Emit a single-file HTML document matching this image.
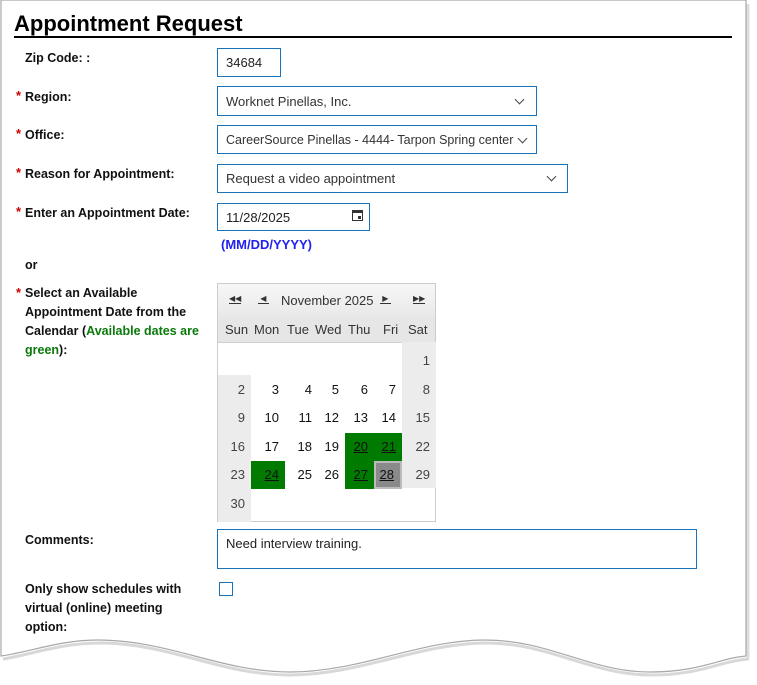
<!DOCTYPE html>
<html><head><style>
body{margin:0;width:757px;height:685px;background:#fff;position:relative;overflow:hidden;font-family:"Liberation Sans",sans-serif;}
.a{position:absolute;}
.lb{position:absolute;left:25px;font-size:12.5px;font-weight:bold;color:#111;line-height:19px;}
.st{position:absolute;left:16px;color:#c00;font-size:13px;font-weight:bold;}
.in{position:absolute;border:1px solid #1a73b8;box-sizing:border-box;font-size:13px;color:#222;padding-left:8px;display:flex;align-items:center;background:#fff;white-space:nowrap;}
.chev{position:absolute;width:6px;height:6px;border-right:1.3px solid #444;border-bottom:1.3px solid #444;transform:rotate(45deg);}
.cal{position:absolute;left:217px;top:283px;width:219px;height:239px;border:1px solid #ccc;box-sizing:border-box;}
.d{position:absolute;font-size:13px;color:#111;text-align:right;height:28px;line-height:28px;box-sizing:border-box;padding-right:6px;}
</style></head><body>
<svg class="a" style="left:0;top:0" width="757" height="685">
<path d="M3,659 C30,655 60,643 100,643 C170,643 220,675 290,675 C360,675 420,643 487,643 C550,643 590,675 652,675 C700,675 720,661 749,659" fill="none" stroke="#d8d8d8" stroke-width="3"/>
<path d="M748,4 L748,658" stroke="#ddd" stroke-width="3" fill="none"/>
<path d="M1,0 L746,0 L746,656 C720,658 700,672 650,672 C590,672 550,640 485,640 C420,640 360,672 290,672 C220,672 170,640 97,640 C60,640 30,652 1,656 Z" fill="#fff" stroke="#a8a8a8" stroke-width="1.2"/>
</svg>
<div class="a" style="left:14px;top:11px;font-size:22px;font-weight:bold;color:#000;">Appointment Request</div>
<div class="a" style="left:14px;top:36px;width:718px;height:2px;background:#000;"></div>

<div class="lb" style="top:49px">Zip Code: :</div>
<div class="in" style="left:217px;top:48px;width:64px;height:29px;">34684</div>

<div class="st" style="top:88px">*</div><div class="lb" style="top:88px">Region:</div>
<div class="in" style="left:217px;top:86px;width:320px;height:30px;color:#333">Worknet Pinellas, Inc.<span class="chev" style="left:298px;top:9px"></span></div>

<div class="st" style="top:126px">*</div><div class="lb" style="top:126px">Office:</div>
<div class="in" style="left:217px;top:125px;width:320px;height:29px;color:#333;font-size:12.5px;overflow:hidden">CareerSource Pinellas - 4444- Tarpon Spring center<span class="chev" style="left:301px;top:9px;background:#fff"></span></div>

<div class="st" style="top:165px">*</div><div class="lb" style="top:165px">Reason for Appointment:</div>
<div class="in" style="left:217px;top:164px;width:351px;height:29px;color:#333">Request a video appointment<span class="chev" style="left:330px;top:8px"></span></div>

<div class="st" style="top:204px">*</div><div class="lb" style="top:204px">Enter an Appointment Date:</div>
<div class="in" style="left:217px;top:203px;width:153px;height:28px;">11/28/2025
<svg class="a" style="left:134px;top:5px" width="11" height="12"><rect x="0.5" y="1.5" width="10" height="10" fill="none" stroke="#333"/><rect x="0.5" y="1.5" width="10" height="2.5" fill="#333"/><rect x="6" y="7" width="3" height="3" fill="#333"/></svg></div>
<div class="a" style="left:221px;top:237px;font-size:13px;font-weight:bold;color:#2222ee;">(MM/DD/YYYY)</div>

<div class="lb" style="top:256px">or</div>
<div class="st" style="top:285px">*</div>
<div class="lb" style="top:284px;width:190px">Select an Available Appointment Date from the Calendar (<span style="color:#0a7a0a">Available dates are green</span>):</div>

<div class="cal">
<div class="a" style="left:0;top:0;width:217px;height:34px;background:linear-gradient(#f7f7f7,#e8e8e8);border-bottom:1px solid #ccc;font-size:13px;color:#333;">
<span class="a" style="left:11px;top:10px;font-size:8px;border-bottom:1px solid #333;">◀◀</span>
<span class="a" style="left:40px;top:10px;font-size:8px;border-bottom:1px solid #333;">&nbsp;◀&nbsp;</span>
<span class="a" style="left:63px;top:9px;">November 2025</span>
<span class="a" style="left:162px;top:10px;font-size:8px;border-bottom:1px solid #333;">&nbsp;▶&nbsp;</span>
<span class="a" style="left:195px;top:10px;font-size:8px;border-bottom:1px solid #333;">▶▶</span>
</div>
<div class="a" style="left:0;top:34px;width:217px;height:24px;background:#e6e6e6;border-bottom:1px solid #d0d0d0;font-size:13px;color:#333;line-height:24px;">
<span class="a" style="left:7px">Sun</span><span class="a" style="left:36px">Mon</span><span class="a" style="left:69px">Tue</span><span class="a" style="left:97px">Wed</span><span class="a" style="left:130px">Thu</span><span class="a" style="left:165px">Fri</span><span class="a" style="left:190px">Sat</span>
</div>
<div class="a" style="left:0;top:91px;width:33px;height:147px;background:#ececec"></div>
<div class="a" style="left:184px;top:58px;width:34px;height:146px;background:#ececec"></div>
<div id="g"></div>
</div>
<script>
var xs=[0,33,67,100,127,156,184],ws=[33,34,33,27,29,28,34];
var h='';
for(var r=0;r<6;r++){for(var c=0;c<7;c++){var idx=r*7+c-5;if(idx<1||idx>30)continue;
var st='';
if([20,21,24,27].indexOf(idx)>=0){st='background:#007a00;text-decoration:underline;';}
if(idx==28){st='background:#8a8a8a;text-decoration:underline;border:2px solid #bbb;line-height:24px;';}
h+='<div class="d" style="left:'+xs[c]+'px;top:'+(63+r*28.5)+'px;width:'+ws[c]+'px;'+st+(c==0||c==6?'color:#444;':'')+'">'+idx+'</div>';}}
document.getElementById('g').innerHTML=h;
</script>

<div class="lb" style="top:531px">Comments:</div>
<div class="in" style="left:217px;top:529px;width:480px;height:40px;align-items:flex-start;padding-top:6px;">Need interview training.</div>

<div class="lb" style="top:580px;width:180px">Only show schedules with virtual (online) meeting option:</div>
<div class="a" style="left:219px;top:582px;width:14px;height:14px;border:1.5px solid #1a73b8;box-sizing:border-box;"></div>
</body></html>
